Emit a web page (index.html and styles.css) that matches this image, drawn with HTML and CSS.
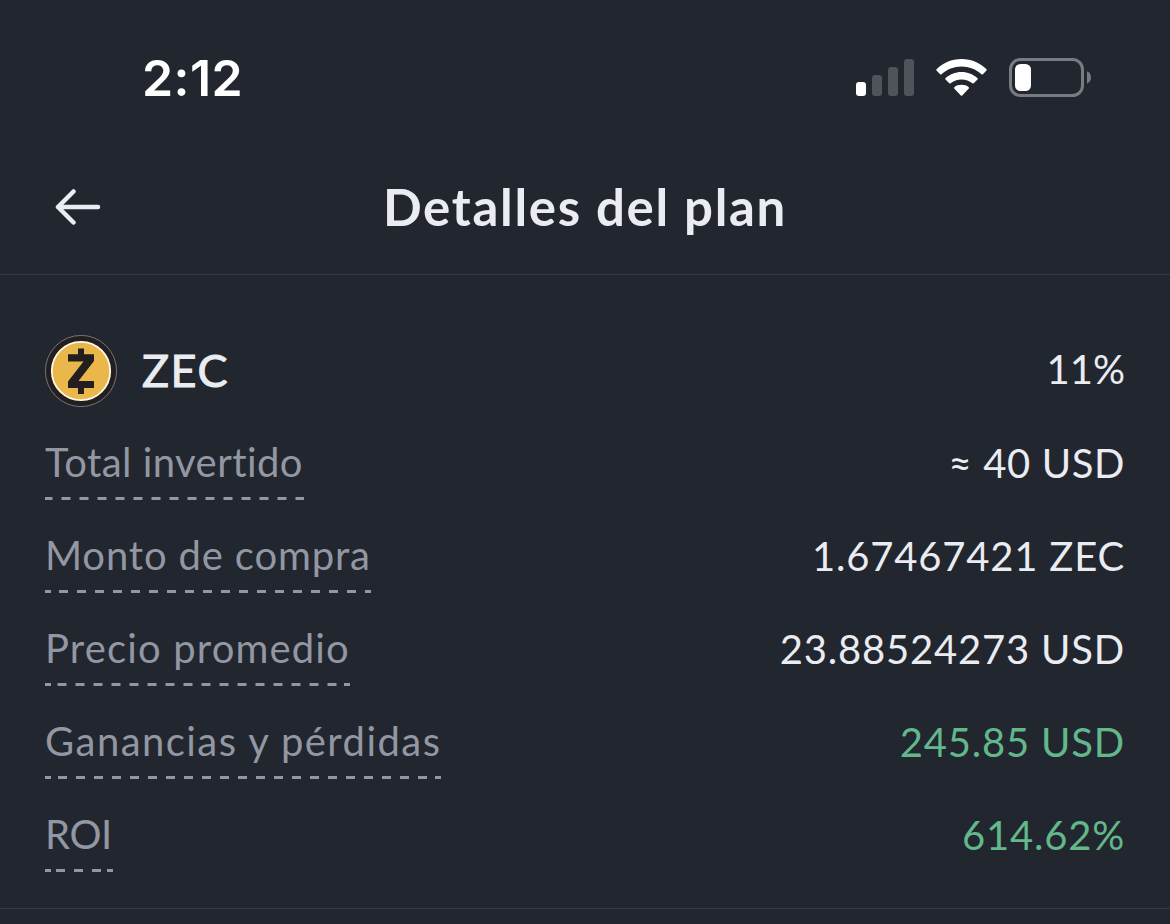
FILE: index.html
```html
<!DOCTYPE html>
<html lang="es">
<head>
	<meta charset="UTF-8">
	<title>Detalles del plan</title>
	<link rel="stylesheet" href="styles.css">
</head>
<body>
	<div class="status">
		<span class="time">2:12</span>
		<div class="status-icons">
			<svg class="signal" width="58" height="37" viewBox="0 0 58 37">
				<rect x="0" y="23" width="10" height="14" rx="3" fill="#fff"/>
				<rect x="16" y="16" width="10" height="21" rx="3" fill="#4f535a"/>
				<rect x="32" y="8" width="10" height="29" rx="3" fill="#4f535a"/>
				<rect x="48" y="0" width="10" height="37" rx="3" fill="#4f535a"/>
			</svg>
			<svg class="wifi" width="51" height="37" viewBox="0 0 51 37">
				<path fill="#fff" d="M25.500 0C35.500 0 44 4 50.500 10.300Q51 10.900 50.500 11.500L46.900 15.300Q46.200 15.900 45.500 15.300C40 10.400 33 7.600 25.500 7.600S11 10.400 5.500 15.300Q4.800 15.900 4.100 15.300L.5 11.500Q0 10.900 .5 10.300C7 4 15.500 0 25.500 0Z"/>
				<path fill="#fff" d="M25.500 13C31.800 13 37.300 15.400 41.500 19.200Q42.100 19.900 41.500 20.500L37.700 24.300Q37.100 24.900 36.400 24.300C33.400 21.900 29.700 20.500 25.500 20.500S17.600 21.900 14.600 24.300Q13.900 24.900 13.300 24.300L9.500 20.500Q8.900 19.900 9.500 19.200C13.700 15.400 19.200 13 25.500 13Z"/>
				<path fill="#fff" d="M25.500 25.800C28.400 25.800 30.800 26.600 32.700 28.200Q33.400 28.900 32.800 29.500L26.200 36.400Q25.500 37 24.800 36.400L18.200 29.500Q17.600 28.900 18.300 28.200C20.200 26.600 22.600 25.800 25.500 25.800Z"/>
			</svg>
			<svg class="battery" width="82" height="39" viewBox="0 0 82 39">
				<rect x="1.500" y="1.500" width="72" height="36" rx="10" fill="none" stroke="#777b82" stroke-width="3"/>
				<rect x="6" y="6" width="16" height="27" rx="5.500" fill="#fff"/>
				<path d="M78 13.300C80.600 14.500 82 16.800 82 19.500S80.600 24.500 78 25.700Z" fill="#777b82"/>
			</svg>
		</div>
	</div>

	<header class="header">
		<svg class="back" width="46" height="36" viewBox="0 0 46 36">
			<path d="M18.500 2.500L3 18L18.500 33.500M3 18H43" fill="none" stroke="#eaecf1" stroke-width="4.500" stroke-linecap="round" stroke-linejoin="round"/>
		</svg>
		<h1 class="title">Detalles del plan</h1>
	</header>

	<main class="plan">
		<div class="coin">
			<svg class="coin-icon" width="72" height="72" viewBox="0 0 72 72">
				<circle cx="36" cy="36" r="35.600" fill="#231f20" stroke="#8b8987" stroke-width=".8"/>
				<circle cx="36" cy="36" r="29.200" fill="#eab84a" stroke="#fff8e8" stroke-width="1.800"/>
				<path fill="#231f20" d="M33 13.500H39V19.300H49V26L33.500 46H49V53H39V59H33V53H23V46.500L38.500 26.500H23V19.300H33Z"/>
			</svg>
			<span class="coin-name">ZEC</span>
			<span class="value percent">11%</span>
		</div>
		<div class="row">
			<span class="label total">Total invertido</span>
			<span class="value v-total">≈ 40 USD</span>
		</div>
		<div class="row">
			<span class="label amount">Monto de compra</span>
			<span class="value">1.67467421 ZEC</span>
		</div>
		<div class="row">
			<span class="label price">Precio promedio</span>
			<span class="value">23.88524273 USD</span>
		</div>
		<div class="row">
			<span class="label profit">Ganancias y pérdidas</span>
			<span class="value green">245.85 USD</span>
		</div>
		<div class="row">
			<span class="label roi">ROI</span>
			<span class="value green">614.62%</span>
		</div>
	</main>
</body>
</html>
```
FILE: styles.css
```css
* {
	box-sizing: border-box;
}
body {
	margin: 0;
	height: 924px;
	overflow: hidden;
	background: #22262f;
	color: #eaecf1;
	font-family: Lato, "Liberation Sans", sans-serif;
	font-variant-ligatures: none;
	white-space: nowrap;
}
svg {
	display: block;
	flex: none;
}
.status {
	display: flex;
	justify-content: space-between;
	height: 140px;
	padding: 58px 79px 0 142px;
}
.time {
	height: 40px;
	color: #fff;
	font: 600 50px/40px Inter, sans-serif;
	letter-spacing: .4px;
}
.status-icons {
	display: flex;
	align-items: flex-start;
}
.signal {
	margin: 1px 22px 0 0;
}
.wifi {
	margin: 1px 22px 0 0;
}
.header {
	display: grid;
	grid-template-columns: 46px 1fr 46px;
	align-items: center;
	height: 135px;
	padding: 0 55px;
	border-bottom: 1px solid #353942;
}
.title {
	margin: 0;
	font-size: 51px;
	line-height: 60px;
	font-weight: 700;
	text-align: center;
	letter-spacing: 1.7px;
}
.plan {
	height: 634px;
	padding: 60px 45px 0;
	border-bottom: 1px solid #353942;
}
.coin {
	display: flex;
	align-items: center;
	height: 72px;
	margin-bottom: 31px;
}
.coin-name {
	margin: -2px 0 0 25px;
	font-size: 45px;
	font-weight: 400;
	letter-spacing: 1.5px;
	-webkit-text-stroke: 1px #eaecf1;
}
.row {
	display: flex;
	justify-content: space-between;
	height: 93px;
}
.label {
	height: 62px;
	color: #9297a3;
	font-size: 40px;
	line-height: 48px;
	/* end caps plus dashes centred under the label */
	background:
		linear-gradient(#9297a3, #9297a3) left bottom / 6px 3px no-repeat,
		linear-gradient(#9297a3, #9297a3) right bottom / 6px 3px no-repeat,
		linear-gradient(90deg, transparent 4.5px, #9297a3 4.5px, #9297a3 13.5px, transparent 13.5px) center bottom / 18px 3px repeat-x;
}
.total {
	width: 259px;
	letter-spacing: .45px;
}
.amount {
	width: 326px;
	letter-spacing: .85px;
}
.price {
	width: 305px;
	letter-spacing: 1.15px;
	background-position: left bottom, right bottom, calc(50% + 9px) bottom;
}
.profit {
	width: 396px;
	letter-spacing: 1.45px;
}
.roi {
	width: 68px;
	letter-spacing: -.4px;
}
.value {
	margin: 1px 0 0 auto;
	font-size: 40px;
	line-height: 48px;
	letter-spacing: .8px;
}
.v-total {
	letter-spacing: .6px;
}
.percent {
	margin-top: -4px;
	letter-spacing: 0;
}
.green {
	color: #62b88b;
}
```
